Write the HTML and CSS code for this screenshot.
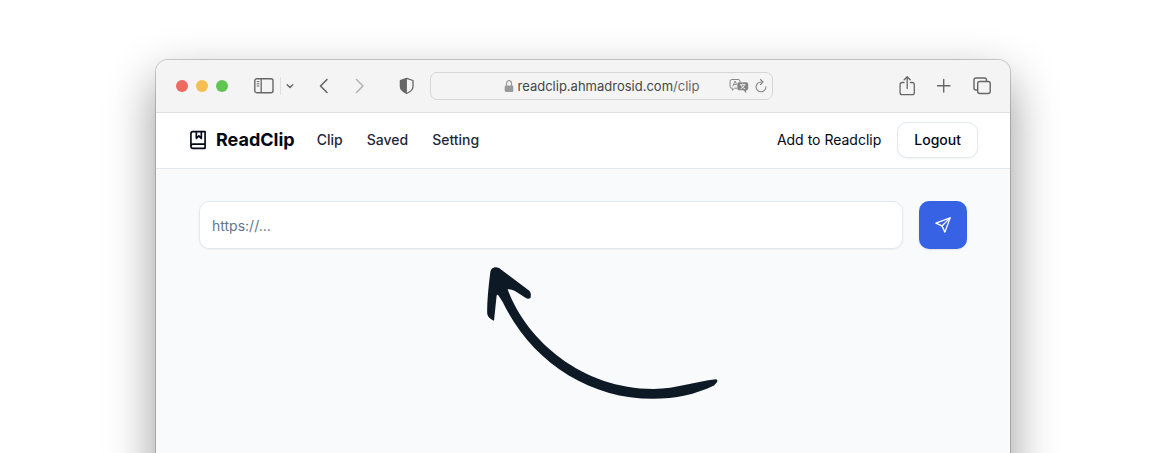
FILE: index.html
```html
<!DOCTYPE html>
<html lang="en">
<head>
<meta charset="utf-8">
<meta name="viewport" content="width=device-width, initial-scale=1">
<title>ReadClip</title>
<link rel="stylesheet" href="styles.css">
</head>
<body>
<div class="stage">
  <div class="window">
    <div class="toolbar">
      <div class="lights">
        <span class="light light-close"></span>
        <span class="light light-minimize"></span>
        <span class="light light-zoom"></span>
      </div>
      <div class="sidebar-group">
        <button class="tool" type="button" aria-label="Sidebar">
          <svg width="20" height="16" viewBox="0 0 20 16" fill="none" stroke="currentColor"><rect x=".8" y=".8" width="18.2" height="13.9" rx="2" stroke-width="1.4"/><path d="M7.2 1v13.5" stroke-width="1.3"/><path d="M2.7 3.6h2.6M2.7 5.8h2.6M2.7 8h2.6" stroke-width="1"/></svg>
        </button>
        <span class="divider"></span>
        <button class="tool" type="button" aria-label="Tab groups">
          <svg width="8" height="16" viewBox="1 0 8 16" fill="none" stroke="currentColor" stroke-width="1.4" stroke-linecap="round" stroke-linejoin="round"><path d="M2.2 6.800l2.800 2.800 2.800-2.800"/></svg>
        </button>
      </div>
      <div class="history">
        <button class="tool" type="button" aria-label="Back">
          <svg width="12" height="18" viewBox="0 0 12 18" fill="none" stroke="currentColor" stroke-width="1.6" stroke-linecap="round" stroke-linejoin="round"><path d="M9 2.5L2.5 9 9 15.5"/></svg>
        </button>
        <button class="tool tool-dim" type="button" aria-label="Forward">
          <svg width="12" height="18" viewBox="0 0 12 18" fill="none" stroke="currentColor" stroke-width="1.6" stroke-linecap="round" stroke-linejoin="round"><path d="M2.5 2.5L9 9l-6.500 6.500"/></svg>
        </button>
      </div>
      <button class="tool shield" type="button" aria-label="Privacy report">
        <svg width="16" height="18" viewBox="0 0 16 18"><path d="M7.700 1.300L14 3.500v6.300c0 3-2.800 5-6.300 6.700-3.500-1.700-6.300-3.700-6.300-6.700V3.500z" fill="none" stroke="currentColor" stroke-width="1.300" stroke-linejoin="round"/><path d="M7.900 1.300v15.200c-3.700-1.700-6.500-3.700-6.500-6.700V3.500z" fill="currentColor"/></svg>
      </button>
      <div class="address">
        <div class="address-text">
          <svg class="lock" width="10" height="14" viewBox="0 0 10 14"><path d="M2.500 7V4.600a2.500 2.900 0 0 1 5 0V7" fill="none" stroke="currentColor" stroke-width="1.200"/><rect x=".7" y="6.500" width="8.600" height="6.500" rx="1.200" fill="currentColor"/></svg>
          <span>readclip.ahmadrosid.com<span class="address-path">/clip</span></span>
        </div>
        <div class="address-tools">
          <button class="tool" type="button" aria-label="Translate">
            <svg width="20" height="16" viewBox="0 0 20 16" fill="none" stroke="currentColor"><path d="M8 10.200H5.500L3.300 12.300v-2.100H2.800A1.700 1.700 0 0 1 1.100 8.500V3.200a1.700 1.700 0 0 1 1.700-1.700h6.500A1.700 1.700 0 0 1 11 3.200v.8"/><path d="M3.700 8.500L6.100 3l1.500 3.500M4.600 6.600h2.800" stroke-width=".9"/><path d="M10 4.200h7.500a1.700 1.700 0 0 1 1.700 1.700v4.700a1.700 1.700 0 0 1-1.700 1.700h-.3v2.600l-2.900-2.600H10a1.700 1.700 0 0 1-1.700-1.700V5.900A1.700 1.700 0 0 1 10 4.200z" fill="currentColor" stroke="none"/><path d="M11 6.700h5.500M13.700 5.500v1.200M15.500 6.800c-.6 1.800-2 3.200-4 4M12 6.800c.7 1.900 2.200 3.300 4.100 4" stroke="#f4f4f4" stroke-width=".9"/></svg>
          </button>
          <button class="tool" type="button" aria-label="Reload">
            <svg width="14" height="16" viewBox="0 0 14 16" fill="none" stroke="currentColor" stroke-width="1.100" stroke-linecap="round" stroke-linejoin="round"><path d="M8.500 4H7a4.900 4.900 0 1 0 4.900 4.900"/><path d="M6.500 1.500L9 4 6.500 6.500"/></svg>
          </button>
        </div>
      </div>
      <div class="actions">
        <button class="tool" type="button" aria-label="Share">
          <svg width="18" height="22" viewBox="0 0 18 22" fill="none" stroke="currentColor" stroke-width="1.300" stroke-linecap="round" stroke-linejoin="round"><path d="M6 7.500H4A1.900 1.900 0 0 0 2.100 9.400v8.400A1.900 1.900 0 0 0 4 19.700h10.400a1.900 1.900 0 0 0 1.900-1.900V9.400a1.900 1.900 0 0 0-1.900-1.900h-2"/><path d="M9.200 13.500V2M6.200 4.800l3-3 3 3"/></svg>
        </button>
        <button class="tool" type="button" aria-label="New tab">
          <svg width="16" height="16" viewBox="0 0 16 16" fill="none" stroke="currentColor" stroke-width="1.400" stroke-linecap="round"><path d="M1.500 7.700h12.500M7.700 1.500v12.500"/></svg>
        </button>
        <button class="tool" type="button" aria-label="Tab overview">
          <svg width="20" height="20" viewBox="0 0 20 20" fill="none" stroke="currentColor" stroke-width="1.400" stroke-linejoin="round"><path d="M5.700 14H4a2 2 0 0 1-2-2V4a2 2 0 0 1 2-2h8.500a2 2 0 0 1 2 2v1.500"/><rect x="5.700" y="5.500" width="12.500" height="12" rx="2"/></svg>
        </button>
      </div>
    </div>

    <header class="navbar">
      <a class="brand" href="#">
        <svg width="20" height="20" viewBox="0 0 24 24" fill="none" stroke="currentColor" stroke-width="2" stroke-linecap="round" stroke-linejoin="round"><path d="M3.500 19.500v-15A2.500 2.500 0 0 1 6 2H20.500v20H6a2.500 2.500 0 0 1 0-5H20.500"/><path d="M10 2v8l3-3 3 3V2"/></svg>
        <span>ReadClip</span>
      </a>
      <nav class="links">
        <a href="#">Clip</a>
        <a href="#">Saved</a>
        <a href="#">Setting</a>
      </nav>
      <div class="account">
        <a class="add-link" href="#">Add to Readclip</a>
        <button class="logout" type="button">Logout</button>
      </div>
    </header>

    <main class="content">
      <form class="clip-form">
        <input class="url-input" type="text" placeholder="https://..." aria-label="Link to clip">
        <button class="send" type="button" aria-label="Send">
          <svg width="18" height="18" viewBox="0 0 24 24" fill="none" stroke="currentColor" stroke-width="1.800" stroke-linecap="round" stroke-linejoin="round"><path d="M21.500 2.500L14.500 21.500l-3.800-8.200L2.500 9.500z"/><path d="M21.500 2.500L10.700 13.300"/></svg>
        </button>
      </form>
      <svg class="arrow" width="250" height="150" viewBox="480 260 250 150" fill="currentColor" aria-hidden="true"><path d="M490.200 273C490.600 267.300 496.500 265.500 501 269.500L529 290.500C531 292.300 531.200 295 530.500 298C528.500 299.200 527 298.700 525.500 297.800L515 291Q511 288.800 507.600 289.200C526 340 582 389 653.500 389C677 388.500 695 381.500 716 379.200C718.500 380 717.500 382.500 714 385.500C695 394.500 676 398.800 653 398.800C590 398.800 535 363 506 308.500Q502.500 301 498.500 295.500C497.500 294.300 496.700 295 496.600 296L494 320.800C491 319.500 487.600 317 487.200 313.500Q486.800 300 490.200 273Z"/></svg>
    </main>
  </div>
</div>
</body>
</html>
```
FILE: styles.css
```css
* {
  box-sizing: border-box;
}

body {
  margin: 0;
  background: #fff;
  color: #020817;
  font-family: Inter, "Liberation Sans", sans-serif;
  font-size: 14px;
  line-height: 20px;
}

a {
  color: inherit;
  text-decoration: none;
}

button,
input {
  font: inherit;
  color: inherit;
}

svg {
  display: block;
  flex: none;
}

.stage {
  height: 100vh;
  padding: 60px 157px 0 156px;
  overflow: hidden;
}

.window {
  min-height: 120vh;
  border-radius: 12px 12px 0 0;
  background: #f8fafc;
  box-shadow: 0 0 0 1px rgba(0, 0, 0, 0.18), 0 20px 48px rgba(0, 0, 0, 0.42);
  overflow: hidden;
}

.toolbar {
  display: flex;
  align-items: center;
  height: 53px;
  padding: 0 18px 0 20px;
  border-bottom: 1px solid #dfdfdf;
  background: #f4f4f4;
}

.lights {
  display: flex;
  gap: 8px;
}

.light {
  width: 12px;
  height: 12px;
  border-radius: 50%;
}

.light-close {
  background: #ed6a5f;
}

.light-minimize {
  background: #f5bf4f;
}

.light-zoom {
  background: #61c554;
}

.tool {
  display: block;
  padding: 0;
  border: 0;
  background: none;
  color: #666;
}

.tool-dim {
  color: #b4b4b4;
}

.sidebar-group {
  display: flex;
  align-items: center;
  gap: 5px;
  margin-left: 26px;
}

.divider {
  width: 1px;
  height: 18px;
  margin-left: 1px;
  background: #dfdfdf;
}

.history {
  display: flex;
  gap: 24px;
  margin-left: 24px;
}

.shield {
  margin-left: 33px;
}

.address {
  display: grid;
  grid-template-columns: 1fr auto 1fr;
  align-items: center;
  flex: 0 1 343px;
  height: 28px;
  margin-left: 15px;
  padding: 0 4px;
  border: 1px solid #d6d6d6;
  border-radius: 7px;
}

.address-text {
  display: flex;
  grid-column: 2;
  align-items: center;
  gap: 4px;
  color: #464646;
  font-size: 13px;
}

.address-path {
  color: #686868;
}

.lock {
  color: #999;
}

.address-tools {
  display: flex;
  gap: 5px;
  justify-content: flex-end;
}

.address-tools .tool {
  color: #858585;
}

.actions {
  display: flex;
  align-items: center;
  gap: 20px;
  margin-left: auto;
}

.navbar {
  display: flex;
  align-items: center;
  height: 56px;
  padding: 0 32px 2px;
  border-bottom: 1px solid #e2e8f0;
  background: #fff;
}

.brand {
  display: flex;
  align-items: center;
  gap: 8px;
  font-size: 18px;
  font-weight: 700;
}

.links {
  display: flex;
  gap: 24px;
  margin-left: 22px;
  color: #1e293b;
  font-weight: 500;
}

.account {
  display: flex;
  align-items: center;
  gap: 16px;
  margin-left: auto;
}

.logout {
  height: 36px;
  padding: 0 16px;
  border: 1px solid #e2e8f0;
  border-radius: 10px;
  background: #fff;
  font-weight: 500;
  box-shadow: 0 1px 2px rgba(0, 0, 0, 0.05);
}

.content {
  padding: 32px 43px;
}

.clip-form {
  display: flex;
  gap: 16px;
}

.url-input {
  flex: 1;
  min-width: 0;
  height: 48px;
  padding: 0 12px;
  border: 1px solid #e2e8f0;
  border-radius: 10px;
  background: #fff;
  box-shadow: 0 1px 2px rgba(0, 0, 0, 0.05);
}

.url-input::placeholder {
  color: #64748b;
}

.send {
  display: flex;
  align-items: center;
  justify-content: center;
  width: 48px;
  height: 48px;
  padding: 0;
  border: 0;
  border-radius: 10px;
  background: #3662e3;
  color: #fff;
  box-shadow: 0 1px 2px rgba(0, 0, 0, 0.1);
}

.arrow {
  margin: 11px 0 0 281px;
  color: #0d1a26;
}
```
